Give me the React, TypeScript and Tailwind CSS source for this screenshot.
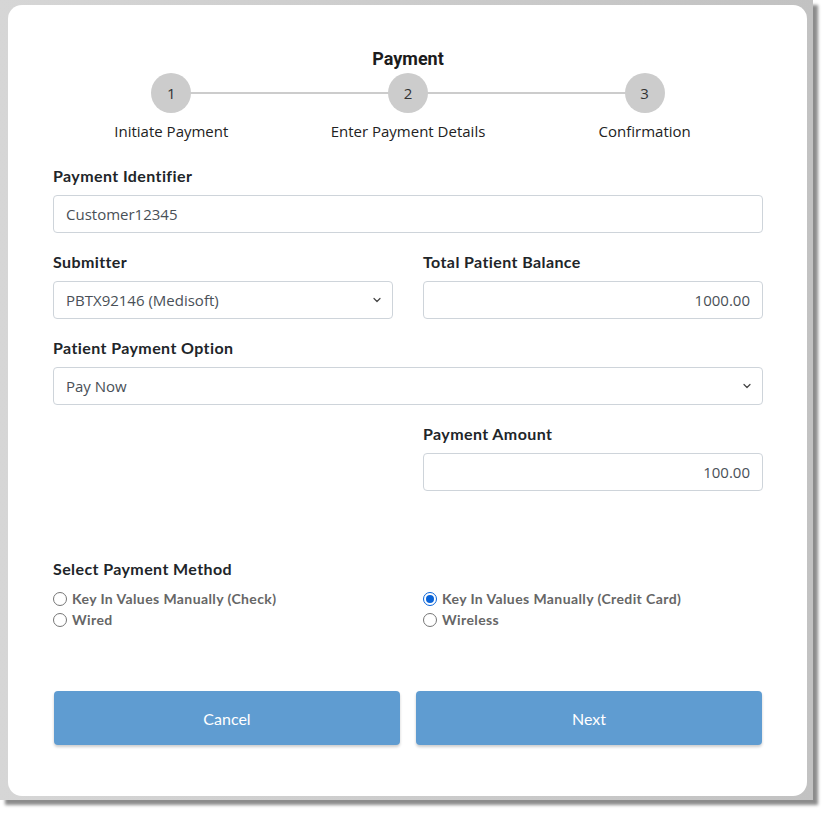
import React from "react";

const lato = { fontFamily: "Lato, 'Open Sans', sans-serif" };
const sans = { fontFamily: "'Open Sans', 'Noto Sans', sans-serif" };

function Chevron() {
  return (
    <svg width="12" height="12" viewBox="0 0 12 12" className="pointer-events-none absolute right-[9px] top-1/2 -translate-y-1/2">
      <path d="M3 4.5 L6 7.5 L9 4.5" fill="none" stroke="#444" strokeWidth="1.2" strokeLinecap="round" strokeLinejoin="round" />
    </svg>
  );
}

function Label({ children }: { children: React.ReactNode }) {
  return (
    <div className="text-[16px] leading-[20px] font-bold tracking-[0.4px] text-[#212529] mb-[9px]" style={lato}>
      {children}
    </div>
  );
}

function Field({ value, align = "left", select = false }: { value: string; align?: "left" | "right"; select?: boolean }) {
  return (
    <div
      className={`relative h-[38px] border border-[#ced4da] rounded-[4px] bg-white flex items-center px-[12px] text-[15px] text-[#495057] ${align === "right" ? "justify-end" : ""}`}
      style={sans}
    >
      <span>{value}</span>
      {select && <Chevron />}
    </div>
  );
}

function Radio({ checked, label }: { checked?: boolean; label: string }) {
  return (
    <label className="flex items-center h-[21px] gap-[5px]">
      {checked ? (
        <span className="w-[14px] h-[14px] rounded-full border-[1.5px] border-[#0a64d8] flex items-center justify-center">
          <span className="w-[8px] h-[8px] rounded-full bg-[#0a64d8]" />
        </span>
      ) : (
        <span className="w-[14px] h-[14px] rounded-full border border-[#767676] bg-white" />
      )}
      <span className="text-[14px] font-bold tracking-[0.4px] text-[#666]" style={lato}>
        {label}
      </span>
    </label>
  );
}

export default function App() {
  const steps = ["Initiate Payment", "Enter Payment Details", "Confirmation"];
  return (
    <div className="w-[828px] h-[814px] bg-white">
      <div className="w-[813px] h-[800px] bg-gradient-to-r from-[#d6d6d6] to-[#c2c2c2] shadow-[5px_5px_3px_rgba(0,0,0,0.45)] pt-[5px] pl-[8px]">
        <div className="w-[799px] h-[791px] bg-white rounded-[14px] pt-[43px] pl-[45px]">
          <div className="w-[710px]">
            <div className="text-center text-[18px] leading-[22px] font-bold text-[#1c1c1c]" style={{ fontFamily: "Roboto, sans-serif" }}>
              Payment
            </div>
            <div className="relative mt-[3px] grid grid-cols-3">
              <div className="absolute left-[118px] right-[118px] top-[19px] h-[2px] bg-[#cccccc]" />
              {steps.map((s, i) => (
                <div key={s} className="relative flex flex-col items-center">
                  <div className="w-[40px] h-[40px] rounded-full bg-[#cccccc] flex items-center justify-center text-[15px] text-[#333]" style={sans}>
                    {i + 1}
                  </div>
                  <div className="mt-[8px] text-[15px] leading-[20px] text-[#222]" style={sans}>
                    {s}
                  </div>
                </div>
              ))}
            </div>

            <div className="mt-[25px]">
              <Label>Payment Identifier</Label>
              <Field value="Customer12345" />
            </div>

            <div className="mt-[19px] grid grid-cols-2 gap-x-[30px]">
              <div>
                <Label>Submitter</Label>
                <Field value="PBTX92146 (Medisoft)" select />
              </div>
              <div>
                <Label>Total Patient Balance</Label>
                <Field value="1000.00" align="right" />
              </div>
            </div>

            <div className="mt-[19px]">
              <Label>Patient Payment Option</Label>
              <Field value="Pay Now" select />
            </div>

            <div className="mt-[19px] grid grid-cols-2 gap-x-[30px]">
              <div />
              <div>
                <Label>Payment Amount</Label>
                <Field value="100.00" align="right" />
              </div>
            </div>

            <div className="mt-[68px]">
              <div className="text-[16px] leading-[20px] font-bold tracking-[0.4px] text-[#212529]" style={lato}>
                Select Payment Method
              </div>
              <div className="mt-[9px] grid grid-cols-2 gap-x-[30px]">
                <div>
                  <Radio label="Key In Values Manually (Check)" />
                  <Radio label="Wired" />
                </div>
                <div>
                  <Radio checked label="Key In Values Manually (Credit Card)" />
                  <Radio label="Wireless" />
                </div>
              </div>
            </div>

            <div className="mt-[61px] flex gap-[16px] pl-[1px]">
              <button className="w-[346px] h-[54px] pt-[1px] rounded-[4px] bg-[#5f9cd1] text-white text-[16px] shadow-[0_2px_3px_rgba(0,0,0,0.2)]" style={lato}>
                Cancel
              </button>
              <button className="w-[346px] h-[54px] pt-[1px] rounded-[4px] bg-[#5f9cd1] text-white text-[16px] shadow-[0_2px_3px_rgba(0,0,0,0.2)]" style={lato}>
                Next
              </button>
            </div>
          </div>
        </div>
      </div>
    </div>
  );
}
